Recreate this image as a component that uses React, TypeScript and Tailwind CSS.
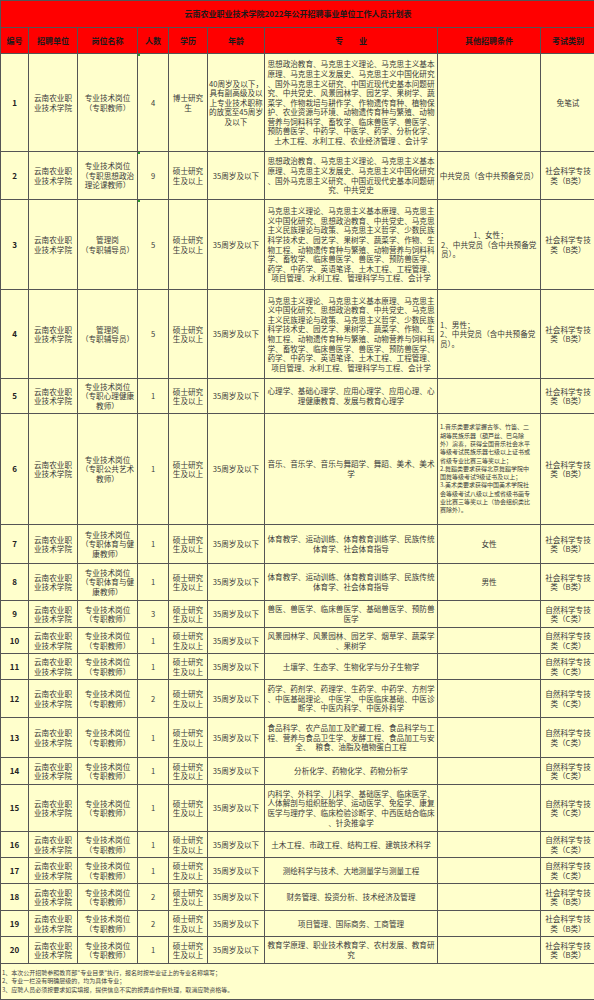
import type { ReactNode } from 'react';
import clsx from 'clsx';

type Row = {
  no: number;
  post: string[];
  count: number;
  edu: string[];
  age: string[];
  major: string[];
  other?: ReactNode;
  exam: string[];
  mark?: boolean;
};

const UNIT = ['云南农业职', '业技术学院'];
const TEACHER = ['专业技术岗位', '（专职教师）'];
const MASTER = ['硕士研究', '生及以上'];
const AGE = ['35周岁及以下'];
const EXAM_B = ['社会科学专技', '类（B类）'];
const EXAM_C = ['自然科学专技', '类（C类）'];

const MAJOR_GUIDE = [
  '马克思主义理论、马克思主义基本原理、马克思主',
  '义中国化研究、思想政治教育、中共党史、马克思',
  '主义民族理论与政策、马克思主义哲学、少数民族',
  '科学技术史、园艺学、果树学、蔬菜学、作物、生',
  '物工程、动物遗传育种与繁殖、动物营养与饲料科',
  '学、畜牧学、临床兽医学、兽医学、预防兽医学、',
  '药学、中药学、英语笔译、土木工程、工程管理、',
  '项目管理、水利工程、管理科学与工程、会计学',
];

const Lines = ({ lines, className }: { lines: string[]; className?: string }) => (
  <>
    {lines.map((l, i) => (
      <div key={i} className={clsx('whitespace-pre', className)}>
        {l}
      </div>
    ))}
  </>
);

const rows: Row[] = [
  {
    no: 1,
    post: TEACHER,
    count: 4,
    edu: ['博士研究', '生'],
    age: ['40周岁及以下，', '具有副高级及以', '上专业技术职称', '的放宽至45周岁', '及以下'],
    major: [
      '思想政治教育、马克思主义理论、马克思主义基本',
      '原理、马克思主义发展史、马克思主义中国化研究',
      '、国外马克思主义研究、中国近现代史基本问题研',
      '究、中共党史、风景园林学、园艺学、果树学、蔬',
      '菜学、作物栽培与耕作学、作物遗传育种、植物保',
      '护、农业资源与环境、动物遗传育种与繁殖、动物',
      '营养与饲料科学、畜牧学、临床兽医学、兽医学、',
      '预防兽医学、中药学、中医学、药学、分析化学、',
      '土木工程、水利工程、农业经济管理 、会计学',
    ],
    exam: ['免笔试'],
    mark: true,
  },
  {
    no: 2,
    post: ['专业技术岗位', '（专职思想政治', '理论课教师）'],
    count: 9,
    edu: MASTER,
    age: AGE,
    major: [
      '思想政治教育、马克思主义理论、马克思主义基本',
      '原理、马克思主义发展史、马克思主义中国化研究',
      '、国外马克思主义研究、中国近现代史基本问题研',
      '究、中共党史',
    ],
    other: <div className="whitespace-nowrap">中共党员（含中共预备党员）</div>,
    exam: EXAM_B,
    mark: true,
  },
  {
    no: 3,
    post: ['管理岗', '（专职辅导员）'],
    count: 5,
    edu: MASTER,
    age: AGE,
    major: MAJOR_GUIDE,
    other: (
      <div className="self-stretch pl-[3px] text-left">
        <div className="text-center">1、女性；</div>
        <div className="whitespace-nowrap">2、中共党员（含中共预备党</div>
        <div>员）。</div>
      </div>
    ),
    exam: EXAM_B,
    mark: true,
  },
  {
    no: 4,
    post: ['管理岗', '（专职辅导员）'],
    count: 5,
    edu: MASTER,
    age: AGE,
    major: MAJOR_GUIDE,
    other: (
      <div className="self-stretch pl-[2px] text-left">
        <div>1、男性；</div>
        <div className="whitespace-nowrap">2、中共党员（含中共预备党</div>
        <div>员）。</div>
      </div>
    ),
    exam: EXAM_B,
  },
  {
    no: 5,
    post: ['专业技术岗位', '（专职心理健康', '教师）'],
    count: 1,
    edu: MASTER,
    age: AGE,
    major: ['心理学、基础心理学、应用心理学、应用心理、心', '理健康教育、发展与教育心理学'],
    exam: EXAM_B,
  },
  {
    no: 6,
    post: ['专业技术岗位', '（专职公共艺术', '教师）'],
    count: 1,
    edu: MASTER,
    age: AGE,
    major: ['音乐、音乐学、音乐与舞蹈学、舞蹈、美术、美术', '学'],
    other: (
      <div className="self-stretch pl-[2px] text-left text-[6px] leading-[8.3px]">
        <Lines
          lines={[
            '1.音乐类要求掌握古筝、竹笛、二',
            '胡等民族乐器（葫芦丝、巴乌除',
            '外）演奏，获得全国音乐社会水平',
            '等级考试民族乐器七级以上证书或',
            '省级专业比赛三等奖以上；',
            '2.舞蹈类要求获得北京舞蹈学院中',
            '国舞等级考试9级证书及以上；',
            '3.美术类要求获得中国美术学院社',
            '会等级考试八级以上或省级书画专',
            '业比赛三等奖以上（协会组织类比',
            '赛除外）。',
          ]}
        />
      </div>
    ),
    exam: EXAM_B,
  },
  {
    no: 7,
    post: ['专业技术岗位', '（专职体育与健', '康教师）'],
    count: 1,
    edu: MASTER,
    age: AGE,
    major: ['体育教学、运动训练、体育教育训练学、民族传统', '体育学、社会体育指导'],
    other: <div>女性</div>,
    exam: EXAM_B,
  },
  {
    no: 8,
    post: ['专业技术岗位', '（专职体育与健', '康教师）'],
    count: 1,
    edu: MASTER,
    age: AGE,
    major: ['体育教学、运动训练、体育教育训练学、民族传统', '体育学、社会体育指导'],
    other: <div>男性</div>,
    exam: EXAM_B,
  },
  {
    no: 9,
    post: TEACHER,
    count: 3,
    edu: MASTER,
    age: AGE,
    major: ['兽医、兽医学、临床兽医学、基础兽医学、预防兽', '医学'],
    exam: EXAM_C,
  },
  {
    no: 10,
    post: TEACHER,
    count: 1,
    edu: MASTER,
    age: AGE,
    major: ['风景园林学、风景园林、园艺学、烟草学、蔬菜学', '、果树学'],
    exam: EXAM_C,
  },
  {
    no: 11,
    post: TEACHER,
    count: 1,
    edu: MASTER,
    age: AGE,
    major: ['土壤学、生态学、生物化学与分子生物学'],
    exam: EXAM_C,
  },
  {
    no: 12,
    post: TEACHER,
    count: 2,
    edu: MASTER,
    age: AGE,
    major: [
      '药学、药剂学、药理学、生药学、中药学、方剂学',
      '、中医基础理论、中医学、中医临床基础、中医诊',
      '断学、中医内科学、中医外科学',
    ],
    exam: EXAM_C,
  },
  {
    no: 13,
    post: TEACHER,
    count: 1,
    edu: MASTER,
    age: AGE,
    major: [
      '食品科学、农产品加工及贮藏工程、食品科学与工',
      '程、营养与食品卫生学、发酵工程、食品加工与安',
      '全、   粮食、油脂及植物蛋白工程',
    ],
    exam: EXAM_C,
  },
  {
    no: 14,
    post: TEACHER,
    count: 1,
    edu: MASTER,
    age: AGE,
    major: ['分析化学、药物化学、药物分析学'],
    exam: EXAM_C,
  },
  {
    no: 15,
    post: TEACHER,
    count: 1,
    edu: MASTER,
    age: AGE,
    major: [
      '内科学、外科学、儿科学、基础医学、临床医学、',
      '人体解剖与组织胚胎学、运动医学、免疫学、康复',
      '医学与理疗学、临床检验诊断学、中西医结合临床',
      '、针灸推拿学',
    ],
    exam: EXAM_C,
  },
  {
    no: 16,
    post: TEACHER,
    count: 1,
    edu: MASTER,
    age: AGE,
    major: ['土木工程、市政工程、结构工程、建筑技术科学'],
    exam: EXAM_C,
  },
  {
    no: 17,
    post: TEACHER,
    count: 1,
    edu: MASTER,
    age: AGE,
    major: ['测绘科学与技术、大地测量学与测量工程'],
    exam: EXAM_C,
  },
  {
    no: 18,
    post: TEACHER,
    count: 2,
    edu: MASTER,
    age: AGE,
    major: ['财务管理、投资分析、技术经济及管理'],
    exam: EXAM_B,
  },
  {
    no: 19,
    post: TEACHER,
    count: 2,
    edu: MASTER,
    age: AGE,
    major: ['项目管理、国际商务、工商管理'],
    exam: EXAM_B,
  },
  {
    no: 20,
    post: TEACHER,
    count: 1,
    edu: MASTER,
    age: AGE,
    major: ['教育学原理、职业技术教育学、农村发展、教育研', '究'],
    exam: EXAM_B,
  },
];

const HEADERS = ['编号', '招聘单位', '岗位名称', '人数', '学历', '年龄', '专　　业', '其他招聘条件', '考试类别'];

const Cell = ({ children, className, last }: { children?: ReactNode; className?: string; last?: boolean }) => (
  <div
    className={clsx(
      'relative flex flex-col items-center justify-center border-b border-[#555] text-center',
      !last && 'border-r',
      className
    )}
  >
    {children}
  </div>
);

const App = () => {
  return (
    <div className="w-[594px] h-[1000px] overflow-hidden bg-[#ffffcc] font-['Noto_Sans_CJK_SC','Liberation_Sans',sans-serif] text-[7.6px] leading-[9.4px] text-[#3a3a3a]">
      <div className="grid grid-cols-[28px_49px_60px_31px_39px_57px_173px_103px_54px] grid-rows-[27px_26px_98px_48px_90px_89px_35px_111px_39px_37px_27px_26px_26px_38px_40px_27px_47px_26px_26px_27px_26px_27px_36px] border-t border-l border-[#555]">
        <div className="col-span-9 flex items-center justify-center border-b border-[#555] bg-[#ff0000] text-[8px] font-bold text-[#1a1a1a]">
          云南农业职业技术学院2022年公开招聘事业单位工作人员计划表
        </div>

        {HEADERS.map((h, i) => (
          <Cell key={h} last={i === 8} className="bg-[#ff0000] text-[8px] font-bold text-[#1a1a1a] whitespace-pre">
            {h}
          </Cell>
        ))}

        {rows.map((r) => (
          <div key={r.no} className="contents">
            <Cell className="text-[8px] font-bold text-[#222]">{r.no}</Cell>
            <Cell>
              <Lines lines={UNIT} />
            </Cell>
            <Cell>
              <Lines lines={r.post} />
            </Cell>
            <Cell>
              {r.mark && <span className="absolute left-0 top-0 h-[2px] w-[2px] bg-[#2a9d2a]" />}
              {r.count}
            </Cell>
            <Cell>
              <Lines lines={r.edu} />
            </Cell>
            <Cell>
              <Lines lines={r.age} />
            </Cell>
            <Cell className="leading-[9.6px]">
              <Lines lines={r.major} />
            </Cell>
            <Cell className="leading-[9.6px]">{r.other}</Cell>
            <Cell last>
              <Lines lines={r.exam} />
            </Cell>
          </div>
        ))}

        <div className="col-span-9 flex flex-col justify-center border-b border-[#555] pl-[1px] text-[6px] leading-[8.5px] text-[#444]">
          <div>1、本次公开招聘参照教育部"专业目录"执行，报名时按毕业证上的专业名称填写；</div>
          <div>2、专业一栏没有明确层级的，均为具体专业；</div>
          <div>3、应聘人员必须按要求如实填报，提供信息不实的按弄虚作假处理，取消应聘资格等。</div>
        </div>
      </div>
    </div>
  );
};

export default App;
